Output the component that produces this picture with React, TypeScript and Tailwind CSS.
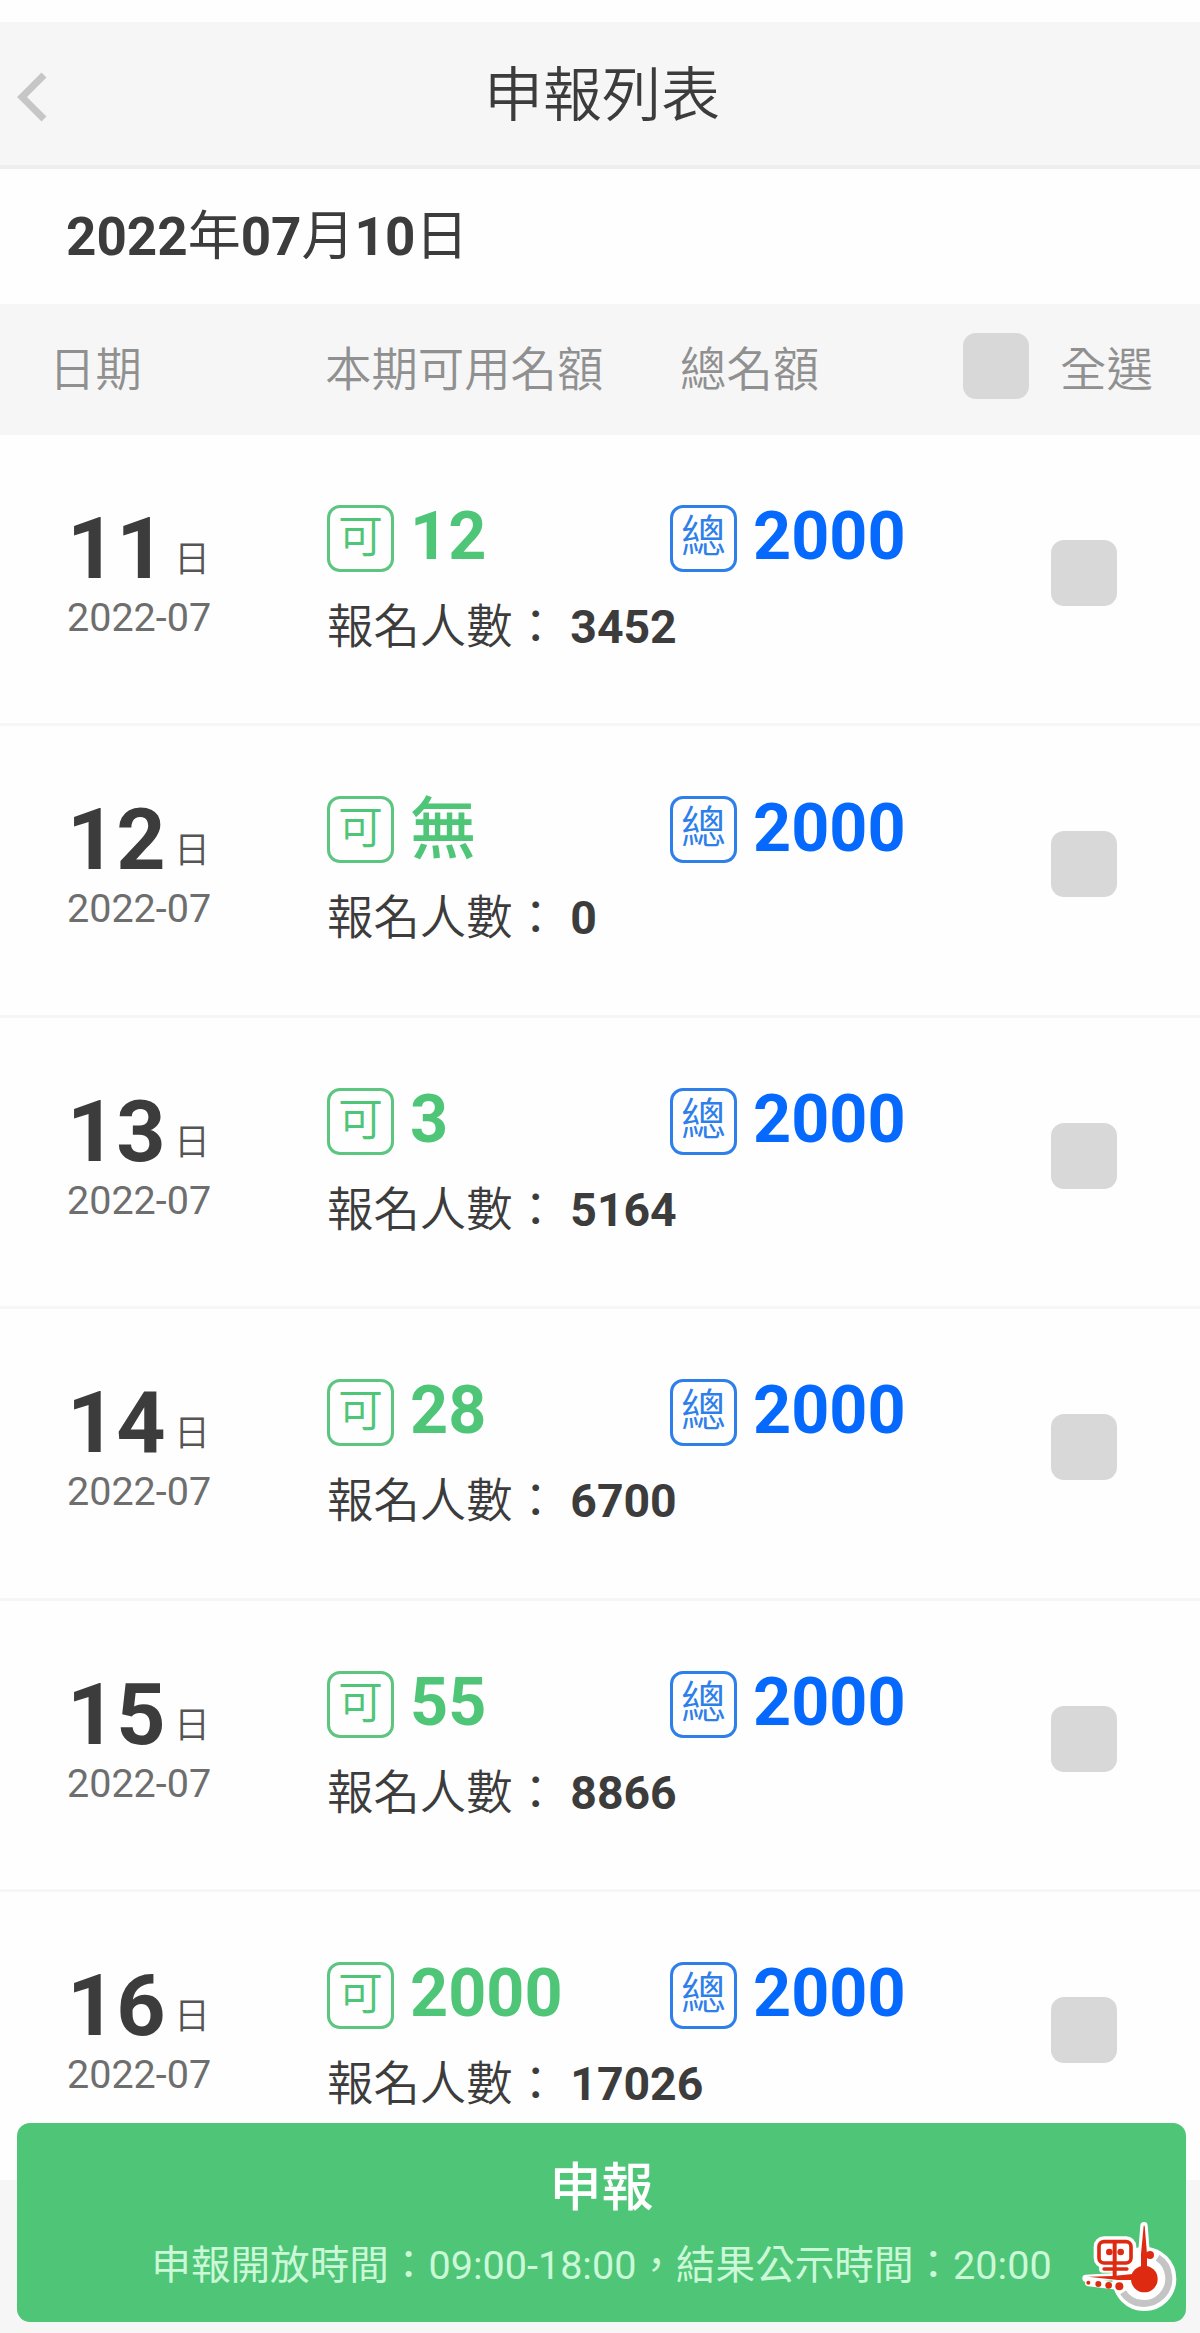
import clsx from "clsx";

type Quota = {
  day: string;
  available: string;
  total: string;
  applicants: string;
};

const MONTH = "2022-07";

const quotas: Quota[] = [
  { day: "11", available: "12", total: "2000", applicants: "3452" },
  { day: "12", available: "無", total: "2000", applicants: "0" },
  { day: "13", available: "3", total: "2000", applicants: "5164" },
  { day: "14", available: "28", total: "2000", applicants: "6700" },
  { day: "15", available: "55", total: "2000", applicants: "8866" },
  { day: "16", available: "2000", total: "2000", applicants: "17026" },
];

function Checkbox() {
  return <div className="h-[66px] w-[66px] shrink-0 rounded-[13px] bg-[#d8d8d8]"></div>;
}

function Amount({ label, value, tone }: { label: string; value: string; tone: "green" | "blue" }) {
  return (
    <div className={clsx("flex h-[67px] items-center", tone === "green" ? "text-[#4fc577]" : "text-[#0569fd]")}>
      <span
        className={clsx(
          "flex h-[67px] w-[67px] shrink-0 items-center justify-center rounded-[13px] border-3 pb-[2px] text-[45px] leading-none font-[350]",
          tone === "green" ? "border-[#5cc580]" : "border-[#2f7fea] text-[#2f7fea]"
        )}
      >
        {label}
      </span>
      <span
        className={clsx(
          "ml-[16px] text-[66.5px] leading-none",
          value === "無" ? "font-medium" : "-mt-1 font-bold"
        )}
      >
        {value}
      </span>
    </div>
  );
}

function QuotaRow({ item }: { item: Quota }) {
  return (
    <div className="flex h-[291.4px] shrink-0 border-b-3 border-[#f6f6f6]">
      <div className="w-[327px] shrink-0 pt-[71px] pl-[67px]">
        <div className="flex leading-[86px]">
          <span className="w-[107px] text-[86px] font-bold">{item.day}</span>
          <span className="pt-[11px] text-[36px] font-[350] text-[#555]">日</span>
        </div>
        <div className="-mt-[8px] text-[39.5px] leading-[46px] text-[#6e6e6e]">{MONTH}</div>
      </div>
      <div className="w-[724px] shrink-0 pt-[70px]">
        <div className="flex">
          <div className="w-[343px]">
            <Amount label="可" value={item.available} tone="green" />
          </div>
          <Amount label="總" value={item.total} tone="blue" />
        </div>
        <div className="mt-[29px] text-[46.4px] leading-[52px] font-[350] whitespace-pre">
          報名人數： <span className="font-bold">{item.applicants}</span>
        </div>
      </div>
      <div className="pt-[105px]">
        <Checkbox />
      </div>
    </div>
  );
}

function Watermark() {
  return (
    <svg className="absolute top-[76px] right-px h-[133px] w-[133px]" viewBox="50 0 399 399">
      <g stroke="#fff" strokeWidth="22" strokeLinejoin="round" strokeLinecap="round" fill="#fff">
        <circle cx="285" cy="240" r="85" />
        <rect x="144" y="123" width="106" height="74" rx="20" />
        <path d="M160 210H237M110 238L245 230M118 251L210 262" />
        <path d="M284 80L274 205H294Z" />
        <circle cx="302" cy="168" r="11" />
      </g>
      <path d="M325 176A75 75 0 1 1 221 280" fill="none" stroke="#c4c4c4" strokeWidth="21" />
      <g fill="#df2a12">
        <circle cx="285" cy="240" r="40" />
        <path d="M283 80H286L293 165V205H275V165Z" />
        <circle cx="302" cy="168" r="12" />
        <path d="M116 233L190 231L250 225V243H205Z" />
        <rect x="190" y="125" width="12" height="110" />
        <rect x="159" y="205" width="79" height="10" rx="5" />
        <circle cx="180" cy="159" r="10" />
        <circle cx="214" cy="159" r="10" />
        <circle cx="117" cy="251" r="6" />
        <circle cx="147" cy="255" r="9" />
        <circle cx="178" cy="259" r="10" />
        <circle cx="210" cy="262" r="12" />
      </g>
      <rect x="149" y="128" width="96" height="64" rx="15" fill="none" stroke="#df2a12" strokeWidth="11" />
    </svg>
  );
}

export default function App() {
  return (
    <div className="relative flex h-[2333px] w-[1200px] flex-col overflow-hidden bg-[#fefefe] pt-[22px] font-['Roboto','Noto_Sans_CJK_TC',sans-serif] text-[#3c3c3c]">
      <header className="flex h-[147px] shrink-0 items-center border-b-4 border-[#eeeeee] bg-[#f6f6f6]">
        <svg className="mt-[7px] ml-[17px] h-[50px] w-8" viewBox="0 0 32 50" fill="none" stroke="#c6c6c6" strokeWidth="7">
          <path d="M27 3L5 25L27 47" />
        </svg>
        <h1 className="mt-[3px] mr-[45px] flex-1 text-center text-[59px] leading-none font-[350]">申報列表</h1>
      </header>

      <div className="flex h-[135px] shrink-0 items-center pt-[2px] pl-[66px] text-[53px]">
        <span className="font-bold">2022</span>年<span className="font-bold">07</span>月
        <span className="font-bold">10</span>日
      </div>

      <div className="flex h-[131px] shrink-0 bg-[#f6f6f6] pt-[29px] text-[46.4px] leading-[75px] font-[350] text-[#909090]">
        <span className="ml-[49px] w-[276px]">日期</span>
        <span className="w-[355px]">本期可用名額</span>
        <span className="w-[283px]">總名額</span>
        <Checkbox />
        <span className="ml-[31px]">全選</span>
      </div>

      <main className="flex flex-1 flex-col overflow-hidden">
        {quotas.map((item) => (
          <QuotaRow key={item.day} item={item} />
        ))}
      </main>

      {/* the submit bar floats over the last row */}
      <footer className="absolute inset-x-0 bottom-0 h-[210px]">
        <div className="mt-[57px] h-[153px] bg-[#f6f6f6]"></div>
        <button className="absolute top-0 left-[17px] flex h-[199px] w-[1169px] flex-col items-center rounded-[13px] bg-[#4fc577] pt-[38px] text-white">
          <span className="text-[52px] leading-[56px] font-medium">申報</span>
          <span className="mt-[25px] text-[39.6px] leading-[48px] text-[#cbf9d8]">
            申報開放時間：09:00-18:00，結果公示時間：20:00
          </span>
        </button>
        <Watermark />
      </footer>
    </div>
  );
}
